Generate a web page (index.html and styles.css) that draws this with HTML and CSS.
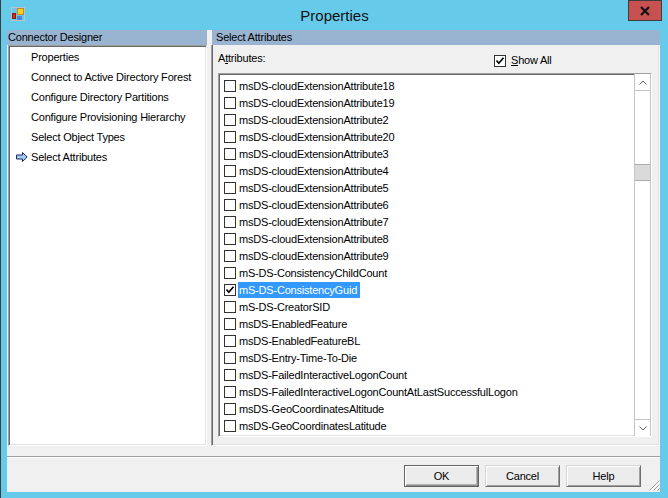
FILE: index.html
```html
<!DOCTYPE html>
<html>
<head>
<meta charset="utf-8">
<link rel="stylesheet" href="styles.css">
</head>
<body>
<div class="window">
  <div class="titlebar">
    <svg class="app-icon" width="14" height="14" viewBox="0 0 14 14">
      <rect x="0.5" y="0.5" width="13" height="13" fill="none" stroke="#b9c4cc"/>
      <rect x="6.5" y="1.5" width="6" height="6" fill="#ffd21f" stroke="#c4862a"/>
      <rect x="1.5" y="6.5" width="3" height="5" fill="#d42a20" stroke="#8a1a14"/>
      <rect x="6" y="9" width="5" height="4" fill="#4f86d8"/>
    </svg>
    <div class="title">Properties</div>
    <div class="close">
      <svg width="12" height="10" viewBox="0 0 12 10">
        <path d="M2 1 L10 9 M10 1 L2 9" stroke="#111" stroke-width="2.2"/>
      </svg>
    </div>
  </div>
  <div class="client">
    <div class="main">
      <div class="left">
        <div class="pane-header">Connector Designer</div>
        <div class="nav">
          <div class="nav-item"><span class="arrow-slot"></span>Properties</div>
          <div class="nav-item"><span class="arrow-slot"></span>Connect to Active Directory Forest</div>
          <div class="nav-item"><span class="arrow-slot"></span>Configure Directory Partitions</div>
          <div class="nav-item"><span class="arrow-slot"></span>Configure Provisioning Hierarchy</div>
          <div class="nav-item"><span class="arrow-slot"></span>Select Object Types</div>
          <div class="nav-item"><span class="arrow-slot"><svg class="arrow" width="12" height="10" viewBox="0 0 12 10"><path d="M0.5 3 H6.5 V0.5 L11.2 5 L6.5 9.5 V7 H0.5 Z" fill="#a9cdee" stroke="#1c2a66"/></svg></span>Select Attributes</div>
        </div>
      </div>
      <div class="splitter"></div>
      <div class="right">
        <div class="pane-header right-header">Select Attributes</div>
        <div class="right-body">
          <div class="attr-row">
            <div class="attr-label">A<u>t</u>tributes:</div>
            <div class="showall">
              <span class="cb checked"><svg width="10" height="10" viewBox="0 0 10 10"><path d="M1.5 4.5 L3.8 7.2 L8.5 1.8" fill="none" stroke="#000" stroke-width="1.7"/></svg></span>
              <span><u>S</u>how All</span>
            </div>
          </div>
          <div class="listbox">
            <div class="items">
              <div class="item"><span class="cb"></span><span class="txt">msDS-cloudExtensionAttribute18</span></div>
              <div class="item"><span class="cb"></span><span class="txt">msDS-cloudExtensionAttribute19</span></div>
              <div class="item"><span class="cb"></span><span class="txt">msDS-cloudExtensionAttribute2</span></div>
              <div class="item"><span class="cb"></span><span class="txt">msDS-cloudExtensionAttribute20</span></div>
              <div class="item"><span class="cb"></span><span class="txt">msDS-cloudExtensionAttribute3</span></div>
              <div class="item"><span class="cb"></span><span class="txt">msDS-cloudExtensionAttribute4</span></div>
              <div class="item"><span class="cb"></span><span class="txt">msDS-cloudExtensionAttribute5</span></div>
              <div class="item"><span class="cb"></span><span class="txt">msDS-cloudExtensionAttribute6</span></div>
              <div class="item"><span class="cb"></span><span class="txt">msDS-cloudExtensionAttribute7</span></div>
              <div class="item"><span class="cb"></span><span class="txt">msDS-cloudExtensionAttribute8</span></div>
              <div class="item"><span class="cb"></span><span class="txt">msDS-cloudExtensionAttribute9</span></div>
              <div class="item"><span class="cb"></span><span class="txt">mS-DS-ConsistencyChildCount</span></div>
              <div class="item"><span class="cb checked"><svg width="10" height="10" viewBox="0 0 10 10"><path d="M1.5 4.5 L3.8 7.2 L8.5 1.8" fill="none" stroke="#000" stroke-width="1.7"/></svg></span><span class="txt selected">mS-DS-ConsistencyGuid</span></div>
              <div class="item"><span class="cb"></span><span class="txt">mS-DS-CreatorSID</span></div>
              <div class="item"><span class="cb"></span><span class="txt">msDS-EnabledFeature</span></div>
              <div class="item"><span class="cb"></span><span class="txt">msDS-EnabledFeatureBL</span></div>
              <div class="item"><span class="cb"></span><span class="txt">msDS-Entry-Time-To-Die</span></div>
              <div class="item"><span class="cb"></span><span class="txt">msDS-FailedInteractiveLogonCount</span></div>
              <div class="item"><span class="cb"></span><span class="txt">msDS-FailedInteractiveLogonCountAtLastSuccessfulLogon</span></div>
              <div class="item"><span class="cb"></span><span class="txt">msDS-GeoCoordinatesAltitude</span></div>
              <div class="item"><span class="cb"></span><span class="txt">msDS-GeoCoordinatesLatitude</span></div>
            </div>
            <div class="scrollbar">
              <div class="sb-btn sb-up"><svg width="8" height="5" viewBox="0 0 8 5"><path d="M0.5 4.5 L4 1 L7.5 4.5" fill="none" stroke="#606060"/></svg></div>
              <div class="sb-track"><div class="sb-thumb"></div></div>
              <div class="sb-btn sb-down"><svg width="8" height="5" viewBox="0 0 8 5"><path d="M0.5 0.5 L4 4 L7.5 0.5" fill="none" stroke="#606060"/></svg></div>
            </div>
          </div>
        </div>
      </div>
    </div>
    <div class="footer">
      <div class="btn default">OK</div>
      <div class="btn">Cancel</div>
      <div class="btn help">Help</div>
      <svg class="grip" width="12" height="12" viewBox="0 0 12 12">
        <path d="M11.5 1.5 L1.5 11.5 M11.5 5.5 L5.5 11.5 M11.5 9.5 L9.5 11.5" stroke="#a0a0a0"/>
        <path d="M11.5 3 L3 11.5 M11.5 7 L7 11.5" stroke="#ffffff"/>
      </svg>
    </div>
  </div>
</div>
</body>
</html>
```

FILE: styles.css
```css
html, body {
  margin: 0;
  padding: 0;
  background: #66cbea;
}

.window {
  width: 668px;
  height: 498px;
  box-sizing: border-box;
  background: #66cbea;
  border-left: 1px solid #3c3c3c;
  font-family: "Liberation Sans", Arial, sans-serif;
  font-size: 11px;
  letter-spacing: -0.2px;
  color: #000;
  display: flex;
  flex-direction: column;
  overflow: hidden;
}

.titlebar {
  height: 30px;
  flex: none;
  display: grid;
  grid-template-columns: 1fr auto 1fr;
  align-items: start;
}

.app-icon {
  margin: 7px 0 0 10px;
}

.title {
  font-size: 15px;
  letter-spacing: 0;
  line-height: 20px;
  margin-top: 6px;
  color: #111;
}

.close {
  justify-self: end;
  width: 34px;
  height: 21px;
  box-sizing: border-box;
  margin-right: 6px;
  background: #c75050;
  border: 1px solid #3c3c3c;
  display: flex;
  align-items: center;
  justify-content: center;
}

.client {
  margin-left: 6px;
  width: 653px;
  height: 462px;
  flex: none;
  background: #f0f0f0;
  display: flex;
  flex-direction: column;
}

.main {
  height: 426px;
  flex: none;
  display: flex;
}

.left {
  width: 200px;
  display: flex;
  flex-direction: column;
}

.pane-header {
  height: 15px;
  line-height: 15px;
  background: #99b4d1;
  padding-left: 1px;
  white-space: nowrap;
  flex: none;
}

.nav {
  height: 401px;
  margin-left: 1px;
  box-sizing: border-box;
  background: #fff;
  border: 1px solid;
  border-color: #a0a0a0 #ffffff #ffffff #a0a0a0;
  box-shadow: inset 1px 1px #696969, inset -1px -1px #e3e3e3;
  padding: 1px 0 0 1px;
}

.nav-item {
  height: 20px;
  line-height: 20px;
  display: flex;
  align-items: center;
  white-space: nowrap;
}

.arrow-slot {
  width: 21px;
  flex: none;
  display: flex;
  align-items: center;
}

.arrow {
  margin-left: 6px;
}

.splitter {
  width: 4px;
  flex: none;
}

.right {
  width: 449px;
  display: flex;
  flex-direction: column;
}

.right-header {
  margin-left: 1px;
  padding-left: 4px;
}

.right-body {
  height: 401px;
  box-sizing: border-box;
  border-left: 1px solid #a0a0a0;
  border-right: 1px solid #ffffff;
  border-bottom: 1px solid #ffffff;
  box-shadow: inset 1px 0 #696969, inset -1px -1px #e3e3e3;
  padding-left: 6px;
  display: flex;
  flex-direction: column;
}

.attr-row {
  height: 28px;
  flex: none;
  display: grid;
  grid-template-columns: 276px auto;
  align-items: start;
}

.attr-label {
  margin-top: 7px;
  line-height: 13px;
}

.showall {
  margin-top: 9px;
  display: flex;
  align-items: center;
  gap: 5px;
  line-height: 13px;
}

.cb {
  width: 12px;
  height: 12px;
  box-sizing: border-box;
  border: 1px solid #333;
  background: #fff;
  flex: none;
  display: flex;
  align-items: center;
  justify-content: center;
}

.listbox {
  width: 434px;
  height: 364px;
  box-sizing: border-box;
  background: #fff;
  border: 1px solid;
  border-color: #a0a0a0 #ffffff #ffffff #a0a0a0;
  box-shadow: inset 1px 1px #696969, inset -1px -1px #e3e3e3;
  display: flex;
  flex: none;
}

.items {
  flex: 1;
  padding-top: 4px;
  overflow: hidden;
}

.item {
  height: 17px;
  display: flex;
  align-items: flex-start;
  white-space: nowrap;
}

.item .cb {
  margin: 2px 2px 0 5px;
}

.txt {
  height: 16px;
  line-height: 16px;
  padding: 0 3px 0 1px;
}

.txt.selected {
  background: #3399ff;
  color: #fff;
}

.scrollbar {
  width: 17px;
  box-sizing: border-box;
  flex: none;
  background: #fff;
  border-left: 1px solid #c4c4c4;
  border-right: 1px solid #c4c4c4;
  display: flex;
  flex-direction: column;
}

.sb-btn {
  height: 17px;
  flex: none;
  box-sizing: border-box;
  display: flex;
  align-items: center;
  justify-content: center;
}

.sb-up {
  border-bottom: 1px solid #c4c4c4;
}

.sb-down {
  border-top: 1px solid #c4c4c4;
}

.sb-track {
  flex: 1;
}

.sb-thumb {
  margin-top: 73px;
  height: 17px;
  box-sizing: border-box;
  background: #dadada;
  border-top: 1px solid #acacac;
  border-bottom: 1px solid #acacac;
}

.footer {
  height: 36px;
  flex: none;
  box-sizing: border-box;
  border-top: 1px solid #a0a0a0;
  box-shadow: inset 0 1px #ffffff;
  display: flex;
  justify-content: flex-end;
  align-items: flex-start;
  gap: 6px;
  padding-top: 8px;
}

.btn {
  width: 75px;
  height: 22px;
  box-sizing: border-box;
  background: #ececec;
  border: 1px solid;
  border-color: #d6d6d6 #707070 #707070 #d6d6d6;
  box-shadow: inset 1px 1px #ffffff, inset -1px -1px #a0a0a0;
  text-align: center;
  line-height: 20px;
}

.btn.default {
  border-color: #646464;
  box-shadow: inset 1px 1px #ffffff, inset -1px -1px #8a8a8a, inset -2px -2px #b4b4b4;
}

.btn.help {
  margin-right: 1px;
}

.grip {
  align-self: flex-end;
  margin-bottom: 1px;
}
```
